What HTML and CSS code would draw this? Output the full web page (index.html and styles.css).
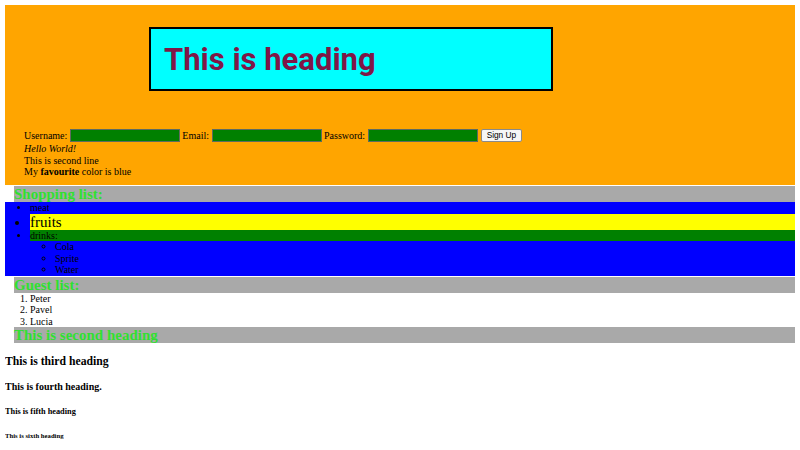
FILE: index.html
```html
<!DOCTYPE html>
<html lang="en">
<head>
<meta charset="utf-8">
<title>My page</title>
<link rel="stylesheet" href="styles.css">
</head>
<body>
<header class="top">
  <h1 class="title">This is heading</h1>
  <form class="signup">
    <label class="lbl">Username:</label><input type="text" class="field">
    <label class="lbl">Email:</label><input type="email" class="field">
    <label class="lbl">Password:</label><input type="password" class="field">
    <button type="button" class="btn">Sign Up</button>
  </form>
  <p class="line"><em>Hello World!</em></p>
  <p class="line">This is second line</p>
  <p class="line">My <b>favourite</b> color is blue</p>
</header>
<h2 class="band band-first">Shopping list:</h2>
<ul class="shop">
  <li>meat</li>
  <li class="fruits">fruits</li>
  <li><div class="drinks">drinks:</div>
    <ul class="sub">
      <li>Cola</li>
      <li>Sprite</li>
      <li>Water</li>
    </ul>
  </li>
</ul>
<h2 class="band band-first">Guest list:</h2>
<ol class="guests">
  <li>Peter</li>
  <li>Pavel</li>
  <li>Lucia</li>
</ol>
<h2 class="band">This is second heading</h2>
<h3 class="h3">This is third heading</h3>
<h4 class="h4">This is fourth heading.</h4>
<h5 class="h5">This is fifth heading</h5>
<h6 class="h6">This is sixth heading</h6>
</body>
</html>
```
FILE: styles.css
```css
* { box-sizing: border-box; }
html { background: #fff; }
body {
  margin: 5px;
  font-family: "Liberation Serif", "Times New Roman", serif;
  font-size: 10px;
  line-height: 11.5px;
  color: #000;
}
.top {
  background: #ffa500;
  height: 180px;
  padding: 22px 0 0 19px;
}
.title {
  margin: 0 0 0 125px;
  width: 404px;
  height: 64px;
  border: 2px solid #000;
  background: #00ffff;
  color: #7f1747;
  font-family: Roboto, "Liberation Sans", sans-serif;
  font-weight: 700;
  font-size: 31px;
  line-height: 1;
  display: flex;
  align-items: center;
  padding-left: 13px;
}
.signup {
  margin: 38px 0 1px;
  display: flex;
  align-items: center;
  column-gap: 2.5px;
  height: 13px;
}
.lbl { white-space: nowrap; }
.field {
  width: 110px;
  height: 13px;
  background: #008000;
  border: 1px solid #5f6b5f;
  padding: 0;
  margin: 0;
}
.btn {
  height: 13px;
  margin: 0 0 0 1px;
  padding: 0 4.5px;
  font-family: "Liberation Sans", Arial, sans-serif;
  font-size: 8.3px;
  line-height: 1;
  color: #000;
  background: #f6f6f6;
  border: 1px solid #8a8a8a;
  border-radius: 2px;
}
.line { margin: 0; }
.band {
  margin: 0 0 0 9px;
  background: #a9a9a9;
  color: #30e030;
  font-size: 15px;
  line-height: 16px;
  font-weight: 700;
}
.band-first { margin-top: 1px; }
.shop {
  margin: 0;
  padding-left: 25px;
  background: #0000ff;
  list-style: disc;
}
.fruits {
  background: #ffff00;
  font-size: 15px;
  line-height: 16px;
}
.drinks { background: #008000; }
.sub {
  margin: 0;
  padding-left: 25px;
  list-style: circle;
}
.guests {
  margin: 0;
  padding-left: 25px;
}
.h3 { font-size: 11.7px; line-height: 13.45px; margin: 11.7px 0; }
.h4 { font-size: 10px; line-height: 11.5px; margin: 13.3px 0; }
.h5 { font-size: 8.3px; line-height: 9.6px; margin: 13.9px 0; }
.h6 { font-size: 6.7px; line-height: 7.7px; margin: 15.6px 0; }
```
